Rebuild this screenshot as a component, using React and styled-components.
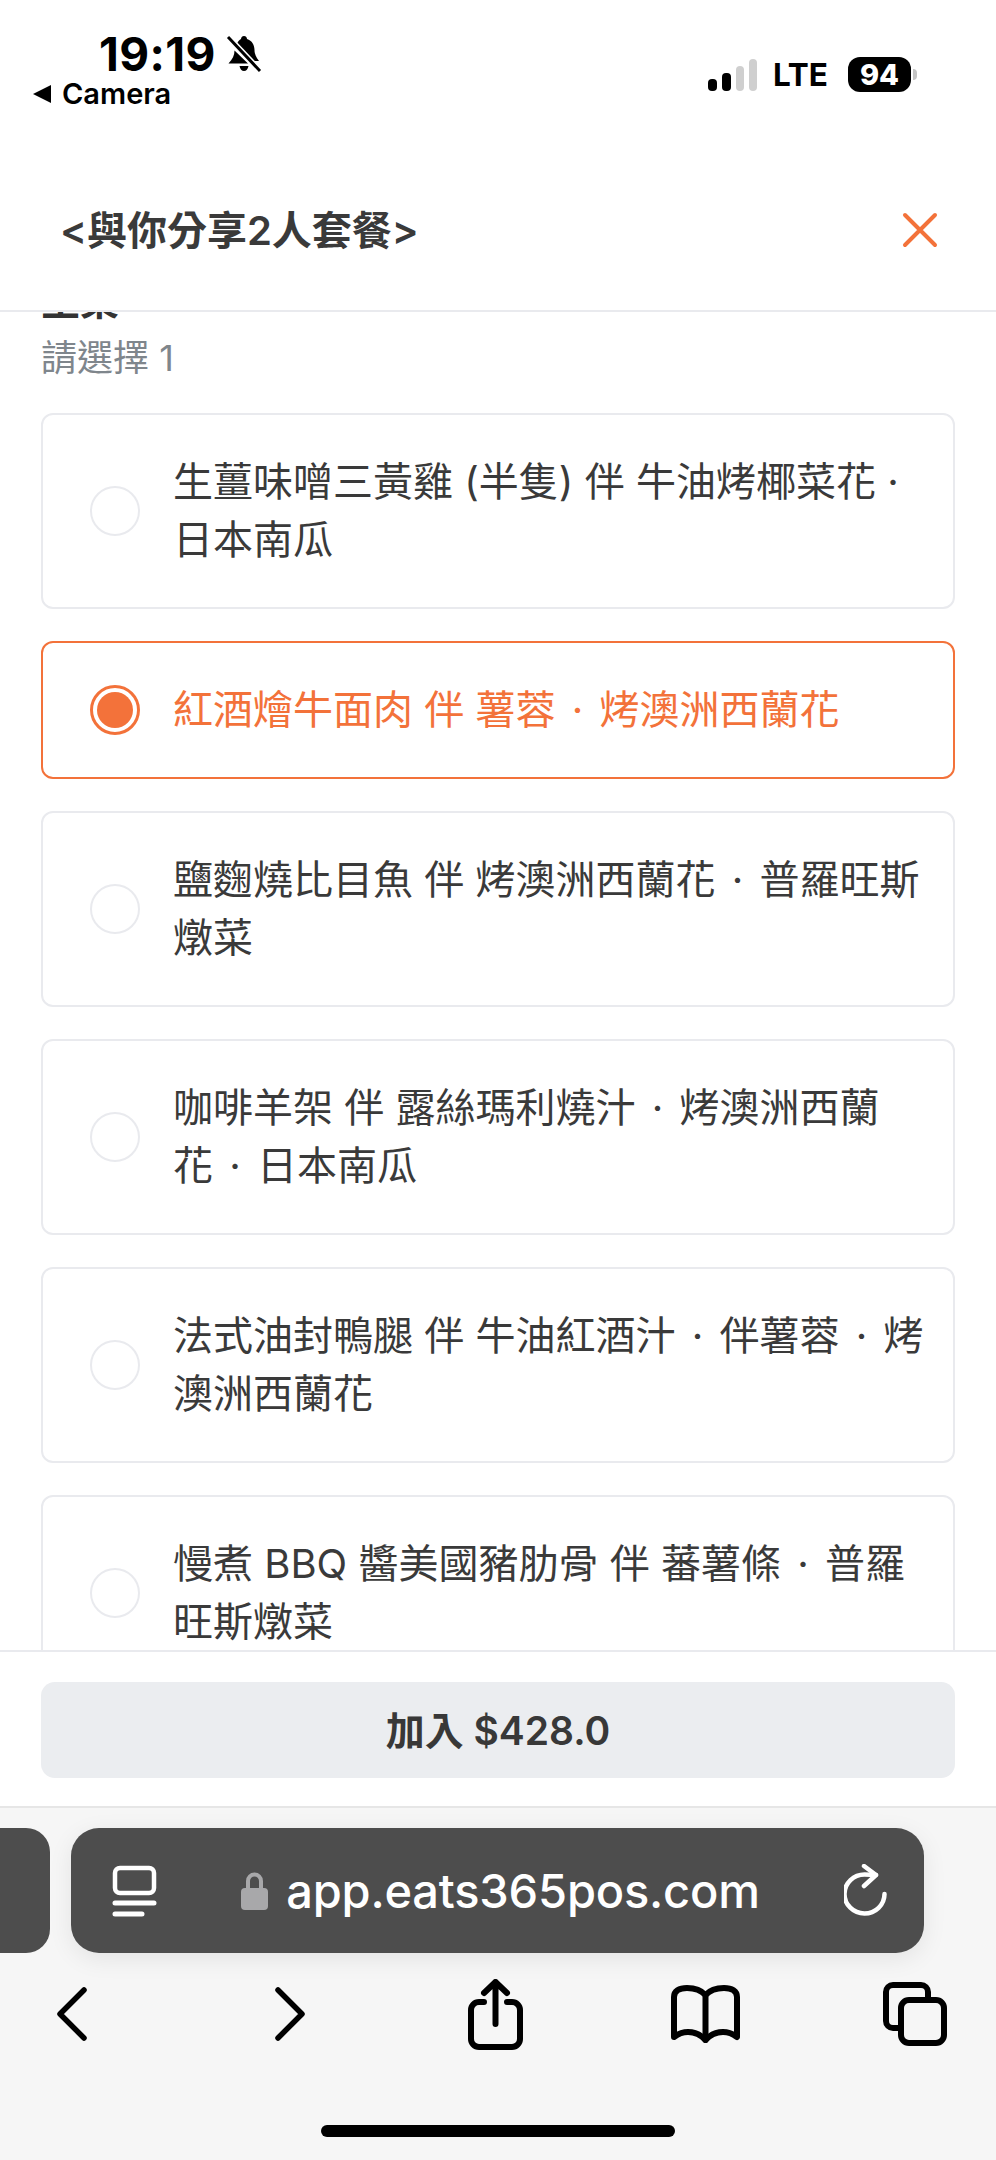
import React from "react";
import styled, { createGlobalStyle } from "styled-components";

const GlobalStyle = createGlobalStyle`
  html, body {
    margin: 0;
    padding: 0;
    background: #fff;
  }
  * {
    box-sizing: border-box;
  }
`;

const FONT = `Inter, "Noto Sans CJK TC", sans-serif`;
const ORANGE = "#f3723a";

const Page = styled.div`
  width: 996px;
  height: 2160px;
  display: flex;
  flex-direction: column;
  overflow: hidden;
  font-family: ${FONT};
  color: #333;
  background: #fff;
`;

const StatusBar = styled.div`
  height: 155px;
  flex: none;
  display: flex;
  justify-content: space-between;
  align-items: flex-start;
  padding: 30px 79px 0 32px;
  color: #000;
`;

const StatusLeft = styled.div`
  display: flex;
  flex-direction: column;
`;

const TimeRow = styled.div`
  display: flex;
  align-items: center;
  gap: 10px;
  margin-left: 67px;
  height: 48px;
`;

const Time = styled.span`
  font-size: 46px;
  font-weight: 700;
  line-height: 48px;
  letter-spacing: 0.4px;
`;

const BackRow = styled.div`
  display: flex;
  align-items: center;
  gap: 10px;
  height: 32px;
`;

const BackText = styled.span`
  font-size: 29px;
  font-weight: 600;
  line-height: 32px;
`;

const StatusRight = styled.div`
  display: flex;
  align-items: center;
  margin-top: 27px;
`;

const Lte = styled.span`
  font-size: 31.500px;
  font-weight: 700;
  line-height: 35px;
  margin: 0 20px 0 15px;
`;

const Battery = styled.div`
  width: 63px;
  height: 35px;
  border-radius: 12px;
  background: #000;
  color: #fff;
  font-size: 29px;
  font-weight: 800;
  line-height: 35px;
  text-align: center;
`;

const BatteryNub = styled.div`
  width: 4px;
  height: 11px;
  margin-left: 2px;
  border-radius: 0 4px 4px 0;
  background: #c4c4c4;
`;

const Header = styled.div`
  height: 157px;
  flex: none;
  display: flex;
  justify-content: space-between;
  align-items: center;
  padding: 0 58px 6px 60px;
  border-bottom: 2px solid #e9eaee;
`;

const Title = styled.h1`
  margin: 0 0 4px;
  font-size: 40px;
  font-weight: 600;
  color: #3a3a3a;
`;

const ScrollArea = styled.div`
  flex: 1;
  min-height: 0;
  overflow: hidden;
  padding: 0 41px;
`;

const SectionTitle = styled.div`
  margin-top: -31px;
  height: 40px;
  font-size: 39px;
  font-weight: 700;
  line-height: 40px;
  color: #333;
`;

const Hint = styled.div`
  margin: 12px 0 30px;
  font-size: 36px;
  line-height: 50px;
  color: #7f868c;
`;

const Options = styled.div`
  display: flex;
  flex-direction: column;
  gap: 32px;
`;

const Option = styled.div`
  display: flex;
  align-items: center;
  gap: 33px;
  padding: 38px 20px 38px 47px;
  border: 2px solid ${(p) => (p.$selected ? ORANGE : "#e9eaee")};
  border-radius: 12px;
  color: ${(p) => (p.$selected ? ORANGE : "#3a3a3a")};
`;

const Radio = styled.span`
  flex: none;
  width: 50px;
  height: 50px;
  border-radius: 50%;
  border: ${(p) => (p.$selected ? `3px solid ${ORANGE}` : "2px solid #e9eaee")};
  display: flex;
  align-items: center;
  justify-content: center;
`;

const RadioDot = styled.span`
  width: 36px;
  height: 36px;
  border-radius: 50%;
  background: ${ORANGE};
`;

const OptionText = styled.div`
  font-size: 40px;
  line-height: 58px;
`;

const OptionLine = styled.div`
  white-space: nowrap;
`;

const Separator = styled.span`
  margin: 0 5px;
`;

const Footer = styled.div`
  height: 158px;
  flex: none;
  padding: 30px 41px;
  background: #fff;
  border-top: 2px solid #e9eaee;
  border-bottom: 2px solid #e6e6e6;
`;

const AddButton = styled.div`
  height: 96px;
  border-radius: 14px;
  background: #ebedf0;
  display: flex;
  align-items: center;
  justify-content: center;
  padding-bottom: 4px;
  font-size: 39px;
  font-weight: 600;
  color: #383838;
`;

const BrowserChrome = styled.div`
  height: 352px;
  flex: none;
  display: flex;
  flex-direction: column;
  background: #f6f6f6;
  padding-top: 20px;
`;

const TabStrip = styled.div`
  display: flex;
  gap: 21px;
  height: 125px;
`;

const PrevTab = styled.div`
  width: 50px;
  background: #4d4d4d;
  border-radius: 0 24px 24px 0;
`;

const AddressBar = styled.div`
  width: 853px;
  border-radius: 28px;
  background: #4d4d4d;
  box-shadow: 0 6px 24px rgba(0, 0, 0, 0.08);
  display: flex;
  align-items: center;
  padding: 0 36px 0 41px;
  color: #fff;
`;

const UrlGroup = styled.div`
  flex: 1;
  display: flex;
  align-items: center;
  justify-content: center;
  gap: 18px;
`;

const Url = styled.span`
  font-size: 47px;
  font-weight: 500;
  letter-spacing: -0.2px;
`;

const ToolBar = styled.div`
  display: flex;
  align-items: center;
  height: 70px;
  margin-top: 26px;
  padding-left: 57px;
`;

const ToolItem = styled.div`
  display: flex;
  margin-left: ${(p) => p.$offset || 0}px;
`;

const HomeIndicator = styled.div`
  width: 354px;
  height: 12px;
  margin: 76px auto 0;
  border-radius: 6px;
  background: #000;
`;

const BellOff = () => (
  <svg width="36" height="38" viewBox="0 0 36 38" fill="#000">
    <path d="M18 1c2 0 3 1.500 3 3 5 1.500 7.500 6 7.500 11 0 4 1.500 7 4.500 11H26L11 8.500C12 6 13.500 5 15 4c0-1.500 1-3 3-3z" />
    <path d="M8.500 15.500L22 28.500H2.500C6.500 24 8.500 20.500 8.500 15.500z" />
    <path d="M13.500 31h9c-.5 3-2.300 5-4.500 5s-4-2-4.500-5z" />
    <path d="M2 2l32 34" stroke="#fff" strokeWidth="6" />
    <path d="M2 2l32 34" stroke="#000" strokeWidth="3" />
  </svg>
);

const BackArrow = () => (
  <svg width="20" height="18" viewBox="0 0 20 18" fill="#000">
    <path d="M19 0v18L1 9z" />
  </svg>
);

const Signal = () => (
  <svg width="50" height="32" viewBox="0 0 50 32">
    <rect x="0" y="20" width="9" height="12" rx="4" fill="#000" />
    <rect x="14" y="14" width="9" height="18" rx="4" fill="#000" />
    <rect x="28" y="7" width="8" height="25" rx="4" fill="#cfcfcf" />
    <rect x="41" y="0" width="8" height="32" rx="4" fill="#cfcfcf" />
  </svg>
);

const Close = () => (
  <svg width="36" height="36" viewBox="0 0 36 36" fill="none" stroke={ORANGE} strokeWidth="4" strokeLinecap="round">
    <path d="M3 3l30 30M33 3L3 33" />
  </svg>
);

const ReaderIcon = () => (
  <svg width="45" height="52" viewBox="0 0 45 52" fill="none" stroke="#fff" strokeLinecap="round">
    <rect x="3" y="3" width="39" height="25" rx="5" strokeWidth="4.500" />
    <path d="M3 38h39M3 49h27" strokeWidth="5" />
  </svg>
);

const LockIcon = () => (
  <svg width="27" height="38" viewBox="0 0 27 38">
    <path d="M7 18V9a6.500 6.500 0 0 1 13 0v9" fill="none" stroke="#a8a8aa" strokeWidth="4" />
    <rect x="0" y="16" width="27" height="22" rx="4" fill="#a8a8aa" />
  </svg>
);

const ReloadIcon = () => (
  <svg width="44" height="54" viewBox="0 0 44 54" fill="none" stroke="#fff" strokeWidth="4.500" strokeLinecap="round" strokeLinejoin="round">
    <path d="M40.500 30A20 19.500 0 1 1 20.700 10.500L32 11" />
    <path d="M20 2l12 9-12 11" />
  </svg>
);

const ChevronLeft = () => (
  <svg width="30" height="54" viewBox="0 0 30 54" fill="none" stroke="#000" strokeWidth="5.500" strokeLinecap="round" strokeLinejoin="round">
    <path d="M27 3L3 27l24 24" />
  </svg>
);

const ChevronRight = () => (
  <svg width="30" height="54" viewBox="0 0 30 54" fill="none" stroke="#000" strokeWidth="5.500" strokeLinecap="round" strokeLinejoin="round">
    <path d="M3 3l24 24L3 51" />
  </svg>
);

const ShareIcon = () => (
  <svg width="56" height="71" viewBox="0 0 56 71" fill="none" stroke="#000" strokeWidth="6" strokeLinecap="round" strokeLinejoin="round">
    <path d="M27.500 3v42M16 14L27.500 3 39 14" />
    <path d="M16 23h-5a8 8 0 0 0-8 8v29a8 8 0 0 0 8 8h33a8 8 0 0 0 8-8V31a8 8 0 0 0-8-8h-5" />
  </svg>
);

const BookIcon = () => (
  <svg width="69" height="58" viewBox="0 0 69 58" fill="none" stroke="#000" strokeWidth="6" strokeLinecap="round" strokeLinejoin="round">
    <path d="M34.500 10C30 5 24 3 16 3 8 3 3 6 3 12v40c4-3 8-5 14-5 7 0 13 3 17.500 8 4.500-5 10.500-8 17.500-8 6 0 10 2 14 5V12c0-6-5-9-13-9-8 0-14 2-18.500 7z" />
    <path d="M34.500 10v45" />
  </svg>
);

const TabsIcon = () => (
  <svg width="66" height="66" viewBox="0 0 66 66" fill="none" stroke="#000" strokeWidth="6" strokeLinejoin="round">
    <path d="M16 47h-5a7 7 0 0 1-7-7V11a7 7 0 0 1 7-7h28a7 7 0 0 1 7 7v5" />
    <rect x="19" y="19" width="43" height="43" rx="8" />
  </svg>
);

const options = [
  { lines: ["生薑味噌三黃雞 (半隻) 伴 牛油烤椰菜花 ·", "日本南瓜"] },
  { lines: ["紅酒燴牛面肉 伴 薯蓉 · 烤澳洲西蘭花"], selected: true },
  { lines: ["鹽麴燒比目魚 伴 烤澳洲西蘭花 · 普羅旺斯", "燉菜"] },
  { lines: ["咖啡羊架 伴 露絲瑪利燒汁 · 烤澳洲西蘭", "花 · 日本南瓜"] },
  { lines: ["法式油封鴨腿 伴 牛油紅酒汁 · 伴薯蓉 · 烤", "澳洲西蘭花"] },
  { lines: ["慢煮 BBQ 醬美國豬肋骨 伴 蕃薯條 · 普羅", "旺斯燉菜"] },
];

// the dots sit wider in the original than the font sets them
const renderLine = (line) =>
  line.split(" · ").map((part, i) => (
    <React.Fragment key={i}>
      {i > 0 && <Separator> · </Separator>}
      {part}
    </React.Fragment>
  ));

export default function App() {
  return (
    <Page>
      <GlobalStyle />
      <StatusBar>
        <StatusLeft>
          <TimeRow>
            <Time>19:19</Time>
            <BellOff />
          </TimeRow>
          <BackRow>
            <BackArrow />
            <BackText>Camera</BackText>
          </BackRow>
        </StatusLeft>
        <StatusRight>
          <Signal />
          <Lte>LTE</Lte>
          <Battery>94</Battery>
          <BatteryNub />
        </StatusRight>
      </StatusBar>

      <Header>
        <Title>&lt;與你分享2人套餐&gt;</Title>
        <Close />
      </Header>

      <ScrollArea>
        <SectionTitle>主菜</SectionTitle>
        <Hint>請選擇 1</Hint>
        <Options>
          {options.map((option, index) => (
            <Option key={index} $selected={option.selected}>
              <Radio $selected={option.selected}>{option.selected && <RadioDot />}</Radio>
              <OptionText>
                {option.lines.map((line) => (
                  <OptionLine key={line}>{renderLine(line)}</OptionLine>
                ))}
              </OptionText>
            </Option>
          ))}
        </Options>
      </ScrollArea>

      <Footer>
        <AddButton>加入 $428.0</AddButton>
      </Footer>

      <BrowserChrome>
        <TabStrip>
          <PrevTab />
          <AddressBar>
            <ReaderIcon />
            <UrlGroup>
              <LockIcon />
              <Url>app.eats365pos.com</Url>
            </UrlGroup>
            <ReloadIcon />
          </AddressBar>
        </TabStrip>
        <ToolBar>
          <ToolItem><ChevronLeft /></ToolItem>
          <ToolItem $offset={188}><ChevronRight /></ToolItem>
          <ToolItem $offset={163}><ShareIcon /></ToolItem>
          <ToolItem $offset={147}><BookIcon /></ToolItem>
          <ToolItem $offset={142}><TabsIcon /></ToolItem>
        </ToolBar>
        <HomeIndicator />
      </BrowserChrome>
    </Page>
  );
}
